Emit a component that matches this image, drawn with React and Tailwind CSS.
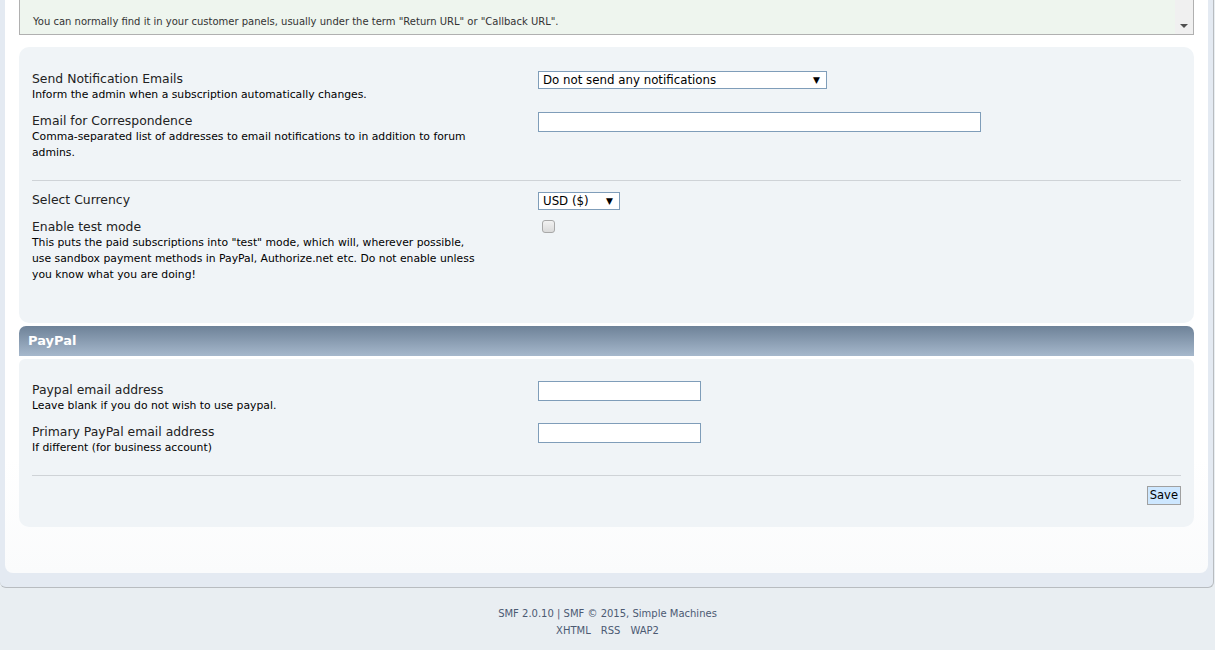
import React from "react";

const font = "font-['Verdana','DejaVu_Sans',sans-serif]";

function Select({ width, text }) {
  return (
    <div className={`h-[18px] ${width} border border-[#7f9db9] bg-white flex items-center justify-between pl-[4px] pr-[6px] text-[11.8px] text-black leading-[16px]`}>
      <span>{text}</span>
      <span className="text-[9px]">▼</span>
    </div>
  );
}

function Input({ width }) {
  return <div className={`h-[20px] ${width} border border-[#7f9db9] bg-white`} />;
}

function Row({ label, desc, children, mb = "mb-[9px]" }) {
  return (
    <div className={`flex ${mb}`}>
      <div className="w-[506px] shrink-0">
        <div className="text-[12.4px] leading-[16px] text-[#222]">{label}</div>
        {desc && <div className="text-[10.8px] leading-[16px] text-black max-w-[449px]">{desc}</div>}
      </div>
      <div>{children}</div>
    </div>
  );
}

export default function App() {
  return (
    <div className={`min-h-[650px] bg-[#e9eef2] ${font}`}>
      <div className="w-[1214px] border-r border-b border-[#b8bcc0] rounded-b-[6px] bg-[#e4eaf2] px-[5px] pb-[14px]">
        <div className="bg-gradient-to-b from-white from-80% to-[#fafbfc] rounded-b-[8px] px-[14px] pb-[46px]">
          {/* textarea remnant */}
          <div className="h-[35px] border-l border-r border-b border-[#b0b0b0] bg-[#eef5ee] flex w-[1175px]">
            <div className="flex-1 pl-[13px] pt-[16px] text-[10px] text-[#333] leading-[12px]">
              You can normally find it in your customer panels, usually under the term "Return URL" or "Callback URL".
            </div>
            <div className="w-[18px] bg-[#f0f0f0] flex items-end justify-center pb-[6px]">
              <div className="w-0 h-0 border-l-[4px] border-r-[4px] border-t-[4px] border-l-transparent border-r-transparent border-t-[#505050]" />
            </div>
          </div>

          {/* panel 1 */}
          <div className="mt-[12px] bg-[#f0f4f7] rounded-[10px] px-[13px] pt-[24px] h-[276px]">
            <Row label="Send Notification Emails" desc="Inform the admin when a subscription automatically changes." mb="mb-[10px]">
              <Select width="w-[289px]" text="Do not send any notifications" />
            </Row>
            <Row label="Email for Correspondence" desc="Comma-separated list of addresses to email notifications to in addition to forum admins.">
              <div className="-mt-[1px]">
                <Input width="w-[443px]" />
              </div>
            </Row>
            <div className="border-t border-[#cfd3d7] mt-[19px] mb-[11px]" />
            <Row label="Select Currency" mb="mb-[9px]">
              <Select width="w-[82px]" text="USD ($)" />
            </Row>
            <Row label="Enable test mode" desc={'This puts the paid subscriptions into "test" mode, which will, wherever possible, use sandbox payment methods in PayPal, Authorize.net etc. Do not enable unless you know what you are doing!'}>
              <div className="ml-[4px] mt-[1px] w-[13px] h-[13px] rounded-[3px] border border-[#a8a8a8] bg-gradient-to-b from-[#f2f2f2] to-[#dadada]" />
            </Row>
          </div>

          {/* PayPal header */}
          <div className="mt-[3px] h-[30px] rounded-t-[7px] bg-gradient-to-b from-[#6e8298] to-[#a6b8cc] flex items-center px-[9px]">
            <span className="text-white font-bold text-[13px]">PayPal</span>
          </div>

          {/* panel 2 */}
          <div className="mt-[3px] bg-[#f0f4f7] rounded-b-[10px] rounded-t-[6px] px-[13px] pt-[23px] pb-[22px]">
            <Row label="Paypal email address" desc="Leave blank if you do not wish to use paypal." mb="mb-[10px]">
              <div className="-mt-[1px]">
                <Input width="w-[163px]" />
              </div>
            </Row>
            <Row label="Primary PayPal email address" desc="If different (for business account)">
              <div className="-mt-[1px]">
                <Input width="w-[163px]" />
              </div>
            </Row>
            <div className="border-t border-[#cfd3d7] mt-[19px] mb-[10px]" />
            <div className="flex justify-end">
              <div className="h-[19px] px-[2px] border border-[#a0a0a0] bg-[#cde7ff] text-[11.5px] leading-[17px] text-black">Save</div>
            </div>
          </div>
        </div>
      </div>
      <div className="pt-[17px] text-center text-[10px] leading-[17px] text-[#4c5a72]">
        <div>SMF 2.0.10 | SMF © 2015, Simple Machines</div>
        <div className="flex justify-center gap-[10px]">
          <span>XHTML</span><span>RSS</span><span>WAP2</span>
        </div>
      </div>
    </div>
  );
}
